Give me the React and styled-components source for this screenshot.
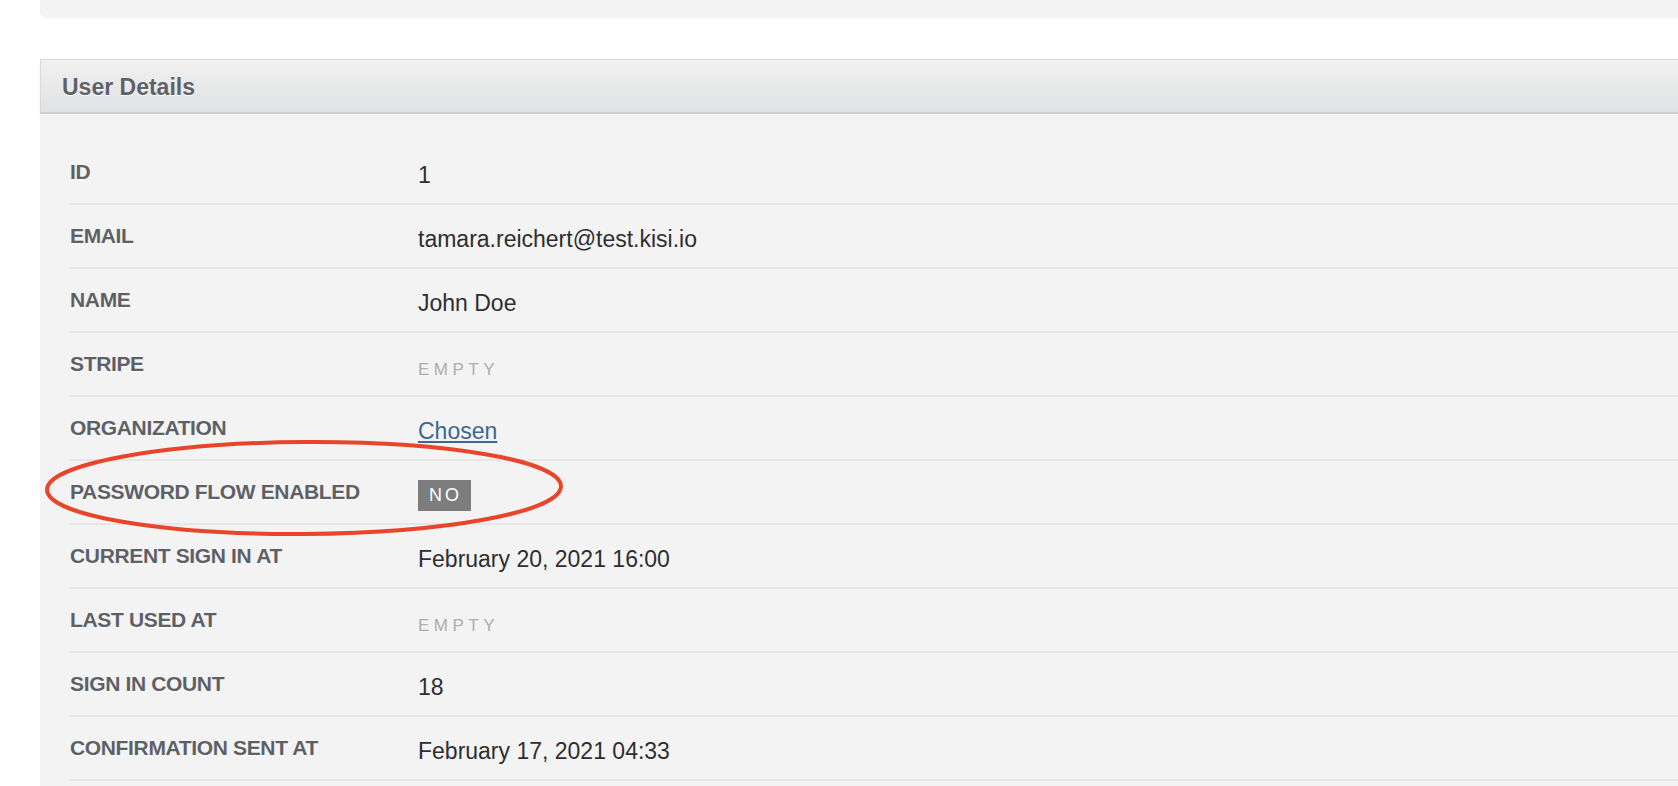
import React from 'react'
import styled, { createGlobalStyle } from 'styled-components'

const GlobalStyle = createGlobalStyle`
html, body {
  margin: 0;
  padding: 0;
  background: #ffffff;
  overflow: hidden;
  font-family: "Liberation Sans", Arial, sans-serif;
}
`

const Page = styled.div`
padding-left: 40px;
width: 1700px;
`

const TopCard = styled.div`
height: 17px;
background: #f3f3f3;
border-radius: 0 0 6px 6px;
box-shadow: 0 1px 2px rgba(0, 0, 0, 0.06);
`

const Panel = styled.section`
margin-top: 42px;
`

const PanelHeader = styled.header`
height: 55px;
box-sizing: border-box;
display: flex;
align-items: center;
padding: 3px 0 0 21px;
background: linear-gradient(#f0f0f0, #e1e2e3);
border: 1px solid #d9d9d9;
border-bottom: 2px solid #cecece;
box-shadow: 0 1px 2px rgba(0, 0, 0, 0.08);
`

const Title = styled.h2`
margin: 0;
font-size: 23px;
font-weight: 700;
color: #5e6166;
text-shadow: 0 1px 0 #ffffff;
`

const Body = styled.div`
position: relative;
background: #f3f3f3;
padding: 27px 0 0 30px;
height: 700px;
`

const Row = styled.div`
display: grid;
grid-template-columns: 348px 1fr;
align-items: center;
height: 62px;
border-bottom: 2px solid #e6e6e6;
`

const Label = styled.div`
font-size: 21px;
font-weight: 700;
letter-spacing: -0.35px;
text-transform: uppercase;
color: #5d6166;
text-shadow: 0 1px 0 #ffffff;
`

const Value = styled.div`
padding-top: 6px;
font-size: 23px;
color: #2e2e2e;
`

const Empty = styled.span`
font-size: 17px;
letter-spacing: 4.5px;
color: #adadad;
`

const Link = styled.a`
color: #3b6793;
text-decoration: underline;
`

const Badge = styled.span`
display: inline-block;
height: 31px;
line-height: 31px;
padding: 0 9px 0 11px;
background: #7d7d7d;
color: #ffffff;
font-size: 18px;
letter-spacing: 3px;
vertical-align: middle;
`

const Annotation = styled.svg`
position: absolute;
left: 5px;
top: 324px;
overflow: visible;
`

const rows = [
  { label: 'ID', value: '1' },
  { label: 'Email', value: 'tamara.reichert@test.kisi.io' },
  { label: 'Name', value: 'John Doe' },
  { label: 'Stripe', empty: true },
  { label: 'Organization', link: 'Chosen' },
  { label: 'Password flow enabled', badge: 'NO' },
  { label: 'Current sign in at', value: 'February 20, 2021 16:00' },
  { label: 'Last used at', empty: true },
  { label: 'Sign in count', value: '18' },
  { label: 'Confirmation sent at', value: 'February 17, 2021 04:33' },
]

const renderValue = (row) => {
  if (row.empty) return <Empty>EMPTY</Empty>
  if (row.link) return <Link href="#">{row.link}</Link>
  if (row.badge) return <Badge>{row.badge}</Badge>
  return row.value
}

export default function App() {
  return (
    <>
      <GlobalStyle />
      <Page>
        <TopCard />
        <Panel>
          <PanelHeader>
            <Title>User Details</Title>
          </PanelHeader>
          <Body>
            {rows.map((row) => (
              <Row key={row.label}>
                <Label>{row.label}</Label>
                <Value>{renderValue(row)}</Value>
              </Row>
            ))}
            <Annotation width="520" height="100" viewBox="0 0 520 100">
              <ellipse cx="259" cy="50" rx="257" ry="46" fill="none" stroke="#e8452a" strokeWidth="4" transform="rotate(-0.4 259 50)" />
            </Annotation>
          </Body>
        </Panel>
      </Page>
    </>
  )
}
